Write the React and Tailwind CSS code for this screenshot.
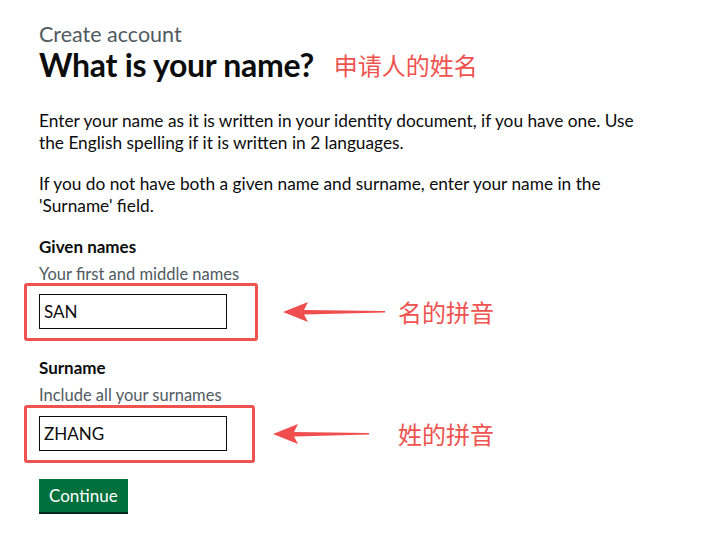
import React from 'react';

const font = { fontFamily: '"Lato", "Noto Sans CJK SC", sans-serif' };

function Arrow({ width }) {
  // red annotation arrow pointing left
  return (
    <svg width={width} height="24" viewBox={`0 0 ${width} 24`} className="shrink-0">
      <polygon
        points={`0,12 25,2 21,10 ${width - 1},11 ${width - 1},12.5 21,14.5 25,22`}
        fill="#f04e4e"
      />
    </svg>
  );
}

function Field({ label, hint, value, boxWidth, arrowGap, arrowWidth, textGap, note, boxMt }) {
  return (
    <div>
      <div className="text-[17px] leading-[22px] font-bold text-[#0b0c0c]">{label}</div>
      <div className="mt-[5px] text-[16.5px] leading-[22px] text-[#505a5f]">{hint}</div>
      <div className={`flex items-center ${boxMt}`}>
        <div
          className="-ml-[15px] h-[58px] border-[3px] border-[#ef5350] rounded-[3px] pl-[12px] pt-[8px]"
          style={{ width: boxWidth }}
        >
          <div className="w-[188px] h-[35px] border border-[#0b0c0c] bg-white flex items-center pl-[4px] text-[17px] text-[#0b0c0c]">
            {value}
          </div>
        </div>
        <div style={{ marginLeft: arrowGap }} className="flex items-center">
          <Arrow width={arrowWidth} />
        </div>
        <div
          style={{ marginLeft: textGap, fontFamily: '"Noto Sans CJK SC", sans-serif' }}
          className="text-[24px] leading-[28px] text-[#ef5350]"
        >
          {note}
        </div>
      </div>
    </div>
  );
}

export default function App() {
  return (
    <div className="min-h-screen bg-white pl-[39px] pt-[22px]" style={font}>
      <div className="text-[21.5px] leading-[24px] text-[#505a5f]">Create account</div>
      <div className="mt-[2px] flex items-center">
        <h1 className="text-[32px] leading-[34px] font-bold text-[#0b0c0c] tracking-[-0.3px]">What is your name?</h1>
        <span
          className="ml-[20px] text-[24px] leading-[30px] text-[#ef5350]"
          style={{ fontFamily: '"Noto Sans CJK SC", sans-serif' }}
        >
          申请人的姓名
        </span>
      </div>

      <div className="w-[606px] text-[17.3px] leading-[22px] text-[#0b0c0c]">
        <p className="mt-[28px]">
          Enter your name as it is written in your identity document, if you have one. Use the English spelling if it is written in 2 languages.
        </p>
        <p className="mt-[19px]">
          If you do not have both a given name and surname, enter your name in the 'Surname' field.
        </p>
      </div>

      <div className="mt-[19px]">
        <Field
          label="Given names"
          hint="Your first and middle names"
          value="SAN"
          boxWidth={234}
          arrowGap={25}
          arrowWidth={103}
          textGap={12}
          note="名的拼音"
          boxMt="-mt-[2px]"
        />
      </div>

      <div className="mt-[16px]">
        <Field
          label="Surname"
          hint="Include all your surnames"
          value="ZHANG"
          boxWidth={231}
          arrowGap={18}
          arrowWidth={97}
          textGap={28}
          note="姓的拼音"
          boxMt="-mt-[1px]"
        />
      </div>

      <button className="mt-[16px] h-[33px] px-[10px] bg-[#00703c] text-white text-[17px] leading-[20px] shadow-[0_2px_0_#002d18]">
        Continue
      </button>
    </div>
  );
}
